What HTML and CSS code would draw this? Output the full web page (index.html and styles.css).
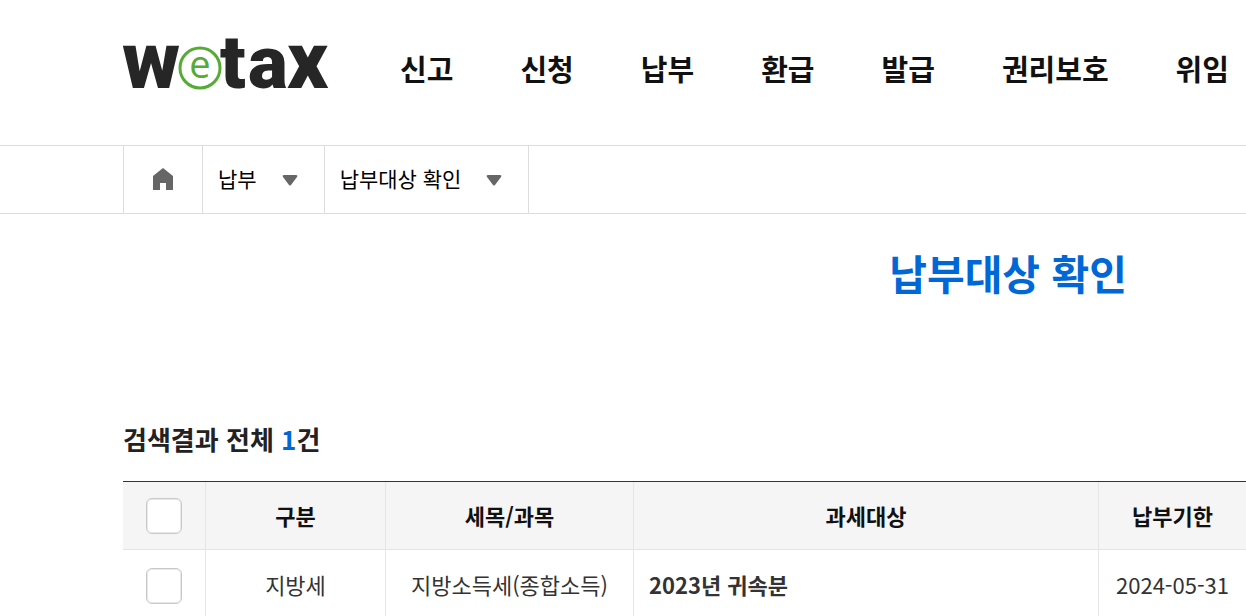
FILE: index.html
```html
<!DOCTYPE html>
<html lang="ko">
<head>
<meta charset="utf-8">
<title>납부대상 확인</title>
<link rel="stylesheet" href="styles.css">
</head>
<body>
<header class="header">
  <a class="logo" href="#" aria-label="wetax">
    <svg class="logo-art" viewBox="0 0 208 54" width="208" height="54" aria-hidden="true">
      <text class="logo-dark" y="51" x="-1">w</text>
      <text class="logo-dark logo-narrow" y="51" x="97">t</text>
      <text class="logo-dark logo-narrow" y="51" x="125">a</text>
      <text class="logo-dark" y="51" x="164">x</text>
      <circle cx="77" cy="31" r="20" fill="#fff" stroke="#56ab36" stroke-width="3"/>
      <text class="logo-green" x="77" y="41" text-anchor="middle">e</text>
    </svg>
  </a>
  <nav class="menu">
    <a href="#">신고</a>
    <a href="#">신청</a>
    <a href="#">납부</a>
    <a href="#">환급</a>
    <a href="#">발급</a>
    <a href="#">권리보호</a>
    <a href="#">위임</a>
  </nav>
</header>
<nav class="path">
  <a class="path-home" href="#" aria-label="홈">
    <svg viewBox="0 0 20 22" width="20" height="22" aria-hidden="true"><path d="M10 0 20 8V22H13V15H7V22H0V8Z" fill="#666"/></svg>
  </a>
  <button class="path-item" type="button"><span class="path-text">납부</span>
    <svg viewBox="0 0 16 12" width="16" height="12" aria-hidden="true"><path d="M2 1H14Q16 1 15 3L9 11Q8 12 7 11L1 3Q0 1 2 1Z" fill="#666"/></svg>
  </button>
  <button class="path-item" type="button"><span class="path-text">납부대상 확인</span>
    <svg viewBox="0 0 16 12" width="16" height="12" aria-hidden="true"><path d="M2 1H14Q16 1 15 3L9 11Q8 12 7 11L1 3Q0 1 2 1Z" fill="#666"/></svg>
  </button>
</nav>
<main class="content">
  <h1 class="title">납부대상 확인</h1>
  <h2 class="count">검색결과 전체 <span class="count-number">1</span>건</h2>
  <table class="results">
    <colgroup><col class="col-check"><col class="col-kind"><col class="col-item"><col class="col-target"><col class="col-due"></colgroup>
    <thead>
      <tr>
        <th><input class="check" type="checkbox" aria-label="전체 선택"></th>
        <th>구분</th><th>세목/과목</th><th>과세대상</th><th>납부기한</th>
      </tr>
    </thead>
    <tbody>
      <tr>
        <td><input class="check" type="checkbox" aria-label="선택"></td>
        <td>지방세</td><td>지방소득세(종합소득)</td><td class="target">2023년 귀속분</td><td>2024-05-31</td>
      </tr>
    </tbody>
  </table>
</main>
</body>
</html>
```
FILE: styles.css
```css
* { box-sizing: border-box; }
body {
  margin: 0;
  overflow: hidden;
  background: #fff;
  color: #111;
  font-family: "Noto Sans CJK KR", sans-serif;
}
a { color: inherit; text-decoration: none; }
.header {
  display: flex;
  align-items: center;
  gap: 69px;
  height: 145px;
  padding: 0 0 10px 123px;
}
.logo { flex: none; display: block; margin-bottom: 8px; }
.logo-art { display: block; overflow: visible; }
.logo-dark { font: 900 80px Roboto, sans-serif; fill: #262626; }
.logo-narrow { font-size: 75px; }
.logo-green { font: 400 38px "Open Sans", sans-serif; fill: #56ab36; }
.menu {
  display: flex;
  gap: 67px;
  font-size: 29px;
  font-weight: 700;
  line-height: 44px;
  white-space: nowrap;
}
.path {
  display: flex;
  height: 69px;
  padding-left: 123px;
  border-top: 1px solid #ddd;
  border-bottom: 1px solid #ddd;
}
.path-home {
  display: flex;
  align-items: center;
  justify-content: center;
  width: 80px;
  padding-bottom: 2px;
  border: solid #ddd;
  border-width: 0 1px;
}
.path-item {
  display: flex;
  align-items: center;
  gap: 25px;
  padding: 0 26px 0 15px;
  border: 0;
  border-right: 1px solid #ddd;
  background: none;
  color: #000;
  font-family: inherit;
  font-size: 21px;
  line-height: 32px;
}
.path-text { padding-bottom: 4px; }
.content { padding: 28px 0 0 123px; }
.title {
  margin: 0 0 118px;
  padding-right: 119px;
  color: #0068d6;
  font-size: 41px;
  font-weight: 700;
  line-height: 60px;
  text-align: right;
}
.count {
  margin: 0 0 23px;
  color: #222;
  font-size: 26px;
  font-weight: 700;
  line-height: 38px;
}
.count-number { color: #0068d6; }
.results {
  width: 100%;
  table-layout: fixed;
  border-collapse: separate;
  border-spacing: 0;
  border-top: 1px solid #333340;
  font-size: 22px;
  line-height: 32px;
}
.col-check { width: 83px; }
.col-kind { width: 180px; }
.col-item { width: 248px; }
.col-target { width: 465px; }
.results th, .results td {
  height: 68px;
  padding: 0 15px 2px;
  border-right: 1px solid #e5e5e5;
  border-bottom: 1px solid #e5e5e5;
  text-align: center;
  white-space: nowrap;
}
.results th:first-child, .results td:first-child { padding-bottom: 0; }
.results th:last-child, .results td:last-child { border-right: 0; }
.results th { background: #f5f5f5; font-weight: 700; }
.results td { height: 72px; padding-bottom: 4px; color: #333; }
.results td.target { text-align: left; font-weight: 700; }
.check {
  appearance: none;
  display: block;
  width: 36px;
  height: 36px;
  margin: 0 auto;
  border: 1px solid #c8c8c8;
  border-radius: 6px;
  background: #fff;
  box-shadow: inset 0 0 0 1px #e8e8e8;
}
```
